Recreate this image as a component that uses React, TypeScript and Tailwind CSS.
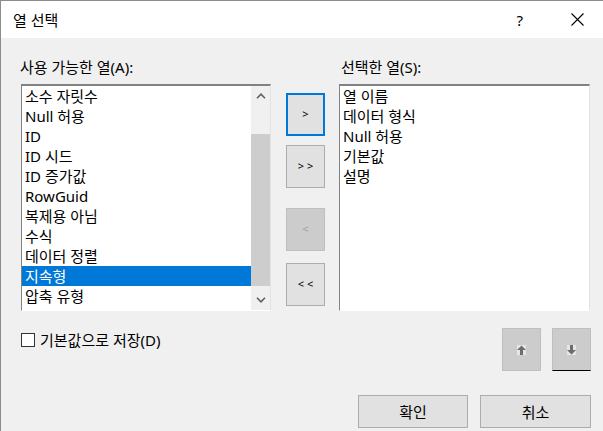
import React from 'react'

const available = ['소수 자릿수', 'Null 허용', 'ID', 'ID 시드', 'ID 증가값', 'RowGuid', '복제용 아님', '수식', '데이터 정렬', '지속형', '압축 유형']
const selected = ['열 이름', '데이터 형식', 'Null 허용', '기본값', '설명']

function Chevron({ up }: { up?: boolean }) {
  return (
    <svg width="10" height="6" viewBox="0 0 10 6">
      <path
        d={up ? 'M1 5.2 L5 1.2 L9 5.2' : 'M1 0.8 L5 4.8 L9 0.8'}
        fill="none"
        stroke="#606060"
        strokeWidth="1.6"
      />
    </svg>
  )
}

function MoveArrow({ up }: { up?: boolean }) {
  return (
    <svg width="9" height="10" viewBox="0 0 9 10">
      <rect width="9" height="10" fill="#e6e6e6" />
      <path
        d={up ? 'M4.5 0.5 L9 5 L6 5 L6 10 L3 10 L3 5 L0 5 Z' : 'M4.5 9.5 L9 5 L6 5 L6 0 L3 0 L3 5 L0 5 Z'}
        fill="#6d6d6d"
      />
    </svg>
  )
}

function ListBox({ items, active, scroll }: { items: string[]; active?: number; scroll?: boolean }) {
  return (
    <div className="flex h-[227px] border-t-2 border-l border-r border-b border-t-[#828282] border-l-[#828282] border-r-[#e3e3e3] border-b-[#ffffff] bg-white">
      <div className="flex-1 flex flex-col">
        {items.map((t, i) => (
          <div
            key={t + i}
            className={
              i === active
                ? 'h-5 leading-5 pl-[3px] bg-[#0078d7] text-white whitespace-nowrap'
                : 'h-5 leading-5 pl-[3px] whitespace-nowrap'
            }
          >
            {t}
          </div>
        ))}
      </div>
      {scroll && (
        <div className="w-[19px] flex flex-col bg-[#f0f0f0]">
          <div className="h-5 flex items-center justify-center">
            <Chevron up />
          </div>
          <div className="h-[28px]" />
          <div className="h-[152px] bg-[#cdcdcd]" />
          <div className="flex-1" />
          <div className="h-5 flex items-center justify-center">
            <Chevron />
          </div>
        </div>
      )}
    </div>
  )
}

export default function App() {
  return (
    <div className="w-[603px] h-[431px] overflow-hidden border-l border-t border-[#8c8c8c] bg-[#f0f0f0] text-[15px] text-black font-['Noto_Sans','Noto_Sans_CJK_KR',sans-serif] flex flex-col">
      <div className="h-[37px] shrink-0 bg-white flex items-center pl-[12px]">
        <span className="leading-5">열 선택</span>
        <span className="ml-auto leading-5 mr-[48px]">?</span>
        <svg width="13" height="13" viewBox="0 0 13 13" className="mr-[19px]">
          <path d="M0.5 0.5 L12.5 12.5 M12.5 0.5 L0.5 12.5" stroke="#000" strokeWidth="1.1" />
        </svg>
      </div>

      <div className="flex flex-col pl-[20px] pr-[12px]">
        <div className="flex mt-[19px]">
          <div className="w-[250px] flex flex-col">
            <div className="h-5 leading-5 -ml-px">사용 가능한 열(A):</div>
            <div className="mt-[7px]">
              <ListBox items={available} active={9} scroll />
            </div>
          </div>

          <div className="w-[39px] ml-[15px] flex flex-col pt-[36px] text-[11px]">
            <button className="h-[43px] border-2 border-[#0078d7] bg-[#e1e1e1] flex items-center justify-center">&gt;</button>
            <button className="h-[43px] mt-[9px] border border-[#adadad] bg-[#e1e1e1] flex items-center justify-center">&gt; &gt;</button>
            <button className="h-[43px] mt-[20px] border border-[#bfbfbf] bg-[#cccccc] text-[#a0a0a0] flex items-center justify-center">&lt;</button>
            <button className="h-[43px] mt-[12px] border border-[#adadad] bg-[#e1e1e1] flex items-center justify-center">&lt; &lt;</button>
          </div>

          <div className="w-[251px] ml-[14px] flex flex-col">
            <div className="h-5 leading-5 ml-[2px]">선택한 열(S):</div>
            <div className="mt-[7px]">
              <ListBox items={selected} />
            </div>
          </div>
        </div>

        <div className="flex items-start mt-[17px]">
          <div className="flex items-center mt-[2px]">
            <span className="w-[14px] h-[14px] border border-[#333333] bg-white" />
            <span className="ml-[5px] h-5 leading-5">기본값으로 저장(D)</span>
          </div>
          <div className="ml-auto flex gap-[11px]">
            <button className="w-[39px] h-[43px] border border-[#bfbfbf] bg-[#cccccc] flex items-center justify-center">
              <MoveArrow up />
            </button>
            <button className="w-[39px] h-[43px] border border-[#bfbfbf] border-b-black bg-[#cccccc] flex items-center justify-center">
              <MoveArrow />
            </button>
          </div>
        </div>

        <div className="flex justify-end gap-[12px] mt-[24px]">
          <button className="w-[110px] h-[33px] border border-[#adadad] bg-[#e1e1e1] leading-5">확인</button>
          <button className="w-[111px] h-[33px] border border-[#adadad] bg-[#e1e1e1] leading-5">취소</button>
        </div>
      </div>
    </div>
  )
}
